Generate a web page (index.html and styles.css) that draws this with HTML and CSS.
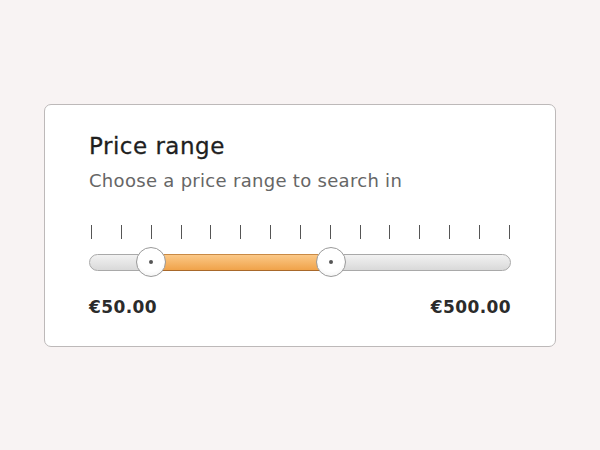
FILE: index.html
```html
<!DOCTYPE html>
<html lang="en">
<head>
    <meta charset="UTF-8">
    <title>Price range</title>
    <link rel="stylesheet" href="styles.css">
</head>
<body>
    <div class="card">
        <h1>Price range</h1>
        <p class="subtitle">Choose a price range to search in</p>

        <div class="ticks">
            <span></span><span></span><span></span><span></span><span></span>
            <span></span><span></span><span></span><span></span><span></span>
            <span></span><span></span><span></span><span></span><span></span>
        </div>

        <div class="slider">
            <div class="track"></div>
            <div class="fill" style="left: 62px; width: 180px;"></div>
            <div class="handle" style="left: 62px;"></div>
            <div class="handle" style="left: 242px;"></div>
        </div>

        <div class="values">
            <span>€50.00</span>
            <span>€500.00</span>
        </div>
    </div>
</body>
</html>
```

FILE: styles.css
```css
body {
    margin: 0;
    background-color: #f8f3f3;
    font-family: 'DejaVu Sans', sans-serif;
    color: #2b2b2b;
}
.card {
    box-sizing: border-box;
    width: 512px;
    height: 243px;
    margin: 104px 0 0 44px;
    padding: 27px 44px 0;
    background: #fff;
    border: 1px solid #bdb9b9;
    border-radius: 7px;
}
h1 {
    margin: 0;
    font-size: 23px;
    font-weight: 400;
    letter-spacing: 0.5px;
    line-height: 28px;
    color: #1f1f1f;
    -webkit-text-stroke: 0.3px #1f1f1f;
}
.subtitle {
    margin: 10px 0 0;
    font-size: 18px;
    letter-spacing: 0.3px;
    line-height: 22px;
    color: #666;
}
.ticks {
    display: flex;
    justify-content: space-between;
    margin: 33px 1px 0 2px;
    height: 14px;
}
.ticks span {
    width: 1px;
    background: #555;
}
.slider {
    position: relative;
    height: 32px;
    margin-top: 7px;
}
.track {
    position: absolute;
    left: 0;
    right: 0;
    top: 8px;
    height: 17px;
    box-sizing: border-box;
    border: 1px solid #a9a9a9;
    border-radius: 9px;
    background: linear-gradient(#f2f2f2, #d9d9d9);
}
.fill {
    position: absolute;
    top: 8px;
    height: 17px;
    box-sizing: border-box;
    border-top: 1px solid #c98a45;
    border-bottom: 1px solid #a8682a;
    background: linear-gradient(#fbc887, #f0a34a);
}
.handle {
    position: absolute;
    top: 1px;
    width: 30px;
    height: 30px;
    margin-left: -15px;
    box-sizing: border-box;
    border: 1px solid #9a9a9a;
    border-radius: 50%;
    background: radial-gradient(circle at 50% 40%, #fff 55%, #ececec);
}
.handle::after {
    content: '';
    position: absolute;
    left: 12px;
    top: 12px;
    width: 4px;
    height: 4px;
    border-radius: 50%;
    background: #555;
}
.values {
    display: flex;
    justify-content: space-between;
    margin-top: 18px;
    font-size: 17px;
    font-weight: 700;
    letter-spacing: 0.4px;
    line-height: 22px;
}
```
